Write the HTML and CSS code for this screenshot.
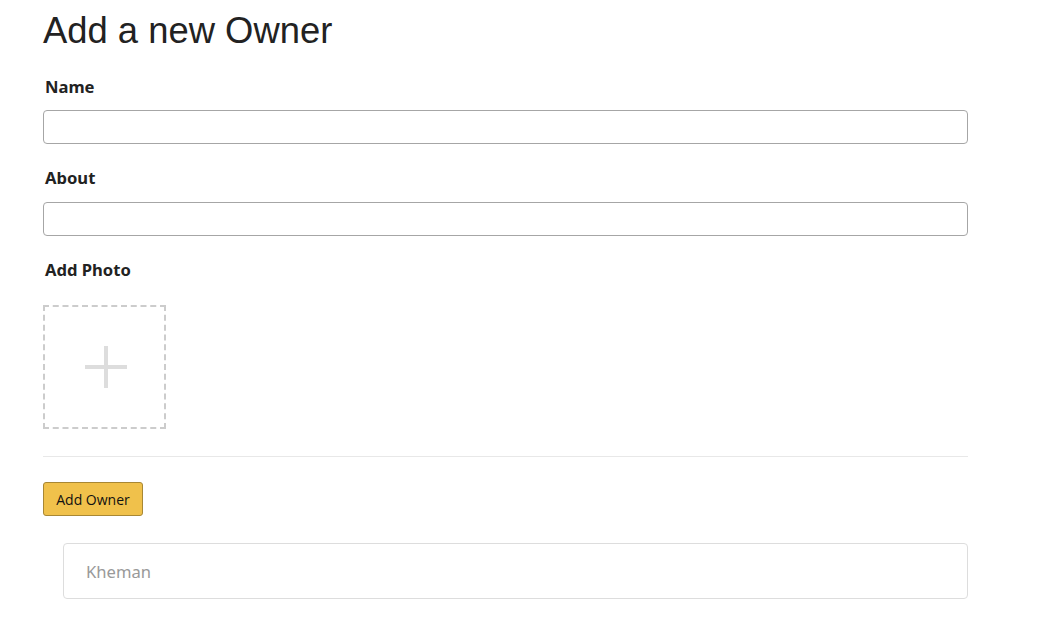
FILE: index.html
```html
<!DOCTYPE html>
<html>
<head>
<meta charset="utf-8">
<title>Add a new Owner</title>
<link rel="stylesheet" href="styles.css">
</head>
<body>
<div class="page">
  <h1 class="title">Add a new Owner</h1>
  <form class="owner-form">
    <div class="field">
      <label class="field-label" for="name">Name</label>
      <input class="field-input" id="name" type="text">
    </div>
    <div class="field">
      <label class="field-label" for="about">About</label>
      <input class="field-input" id="about" type="text">
    </div>
    <div class="field">
      <span class="field-label">Add Photo</span>
      <div class="photo-box">
        <svg class="plus" width="44" height="44" viewBox="0 0 44 44">
          <rect x="20" y="1" width="4" height="42" fill="#dddddd"/>
          <rect x="1" y="20" width="42" height="4" fill="#dddddd"/>
        </svg>
      </div>
    </div>
    <hr class="divider">
    <button class="btn-add" type="button">Add Owner</button>
  </form>
  <ul class="owner-list">
    <li class="owner-item">Kheman</li>
  </ul>
</div>
</body>
</html>
```
FILE: styles.css
```css
* { box-sizing: border-box; }
html, body { margin: 0; padding: 0; background: #fff; }
body { font-family: "Noto Sans", "Open Sans", sans-serif; color: #222; }
.page { width: 968px; padding-left: 43px; padding-top: 11px; }
.title {
  margin: 0;
  font-family: "Liberation Sans", Arial, sans-serif;
  font-weight: 400;
  font-size: 36.4px;
  line-height: 40px;
  color: #222;
}
.owner-form { margin-top: 25px; }
.field { display: flex; flex-direction: column; align-items: flex-start; margin-bottom: 23px; }
.field-label {
  display: block;
  font-size: 16.6px;
  line-height: 22px;
  font-weight: 700;
  color: #222;
  margin-left: 2px;
  margin-bottom: 12px;
}
.field-input {
  width: 100%;
  height: 34px;
  border: 1px solid #a6a6a6;
  border-radius: 4px;
  margin: 0;
  padding: 4px 8px;
  font: inherit;
}
.field:nth-child(2) .field-label { margin-bottom: 13px; }
.field:nth-child(3) { margin-bottom: 0; }
.field:nth-child(3) .field-label { margin-bottom: 24px; }
.photo-box {
  width: 123px;
  height: 124px;
  border: 2px dashed #cccccc;
  display: flex;
  align-items: center;
  justify-content: center;
  padding-left: 2px;
}
.divider {
  border: 0;
  border-top: 1px solid #e8e8e8;
  margin: 27px 0 25px;
}
.btn-add {
  display: block;
  height: 34px;
  width: 100px;
  padding: 0;
  background: #f0c14b;
  border: 1px solid #a88734;
  border-radius: 3px;
  font-family: "Open Sans", "Noto Sans", sans-serif;
  font-size: 14px;
  color: #111;
}
.owner-list { list-style: none; margin: 27px 0 0; padding: 0 0 0 20px; }
.owner-item {
  height: 56px;
  border: 1px solid #dddddd;
  border-radius: 4px;
  padding: 0 22px;
  display: flex;
  align-items: center;
  font-size: 16.6px;
  color: #999;
}
```
